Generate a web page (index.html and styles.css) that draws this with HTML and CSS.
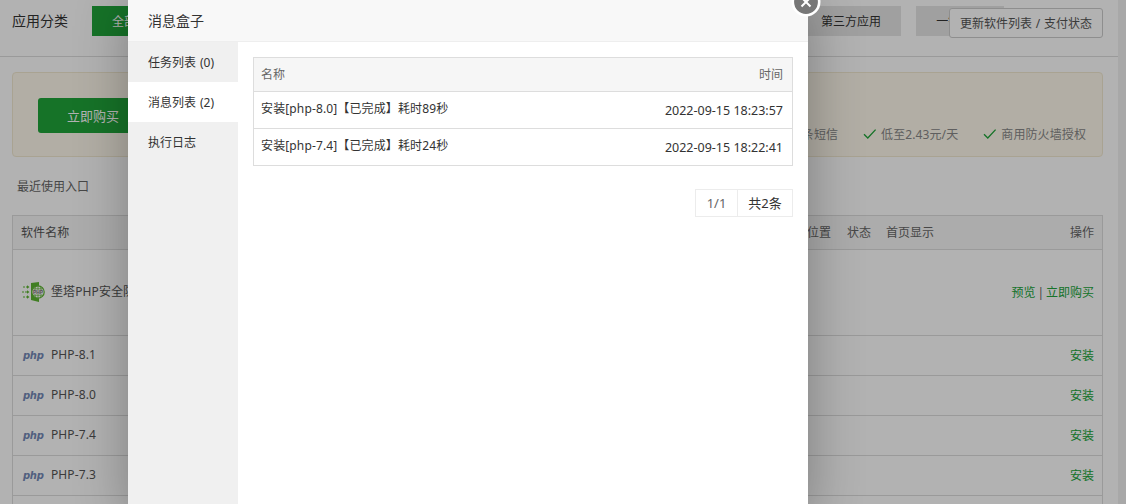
FILE: index.html
```html
<!DOCTYPE html>
<html lang="zh-CN">
<head>
    <meta charset="UTF-8">
    <meta name="viewport" content="width=device-width, initial-scale=1.0">
    <title>软件商店</title>
    <link rel="stylesheet" href="styles.css">
</head>
<body>
    <svg class="defs" width="0" height="0">
        <symbol id="check" viewBox="0 0 14 12">
            <path d="M1 6.2L4.8 10L12.6 1.6" fill="none" stroke="#20a53a" stroke-width="1.3"/>
        </symbol>
    </svg>
    <div class="page">
        <div class="category">
            <span class="category-title">应用分类</span>
            <div class="category-list">
                <button class="active">全部</button>
                <button>已安装</button>
                <button>运行环境</button>
                <button>系统工具</button>
                <button>宝塔插件</button>
                <button>专业版插件</button>
                <button>企业版插件</button>
                <button>第三方应用</button>
                <button>一键部署</button>
            </div>
            <button class="update">更新软件列表 / 支付状态</button>
        </div>

        <div class="banner">
            <button class="buy">立即购买</button>
            <ul class="features">
                <li><svg class="check"><use href="#check"/></svg>每月赠送条短信</li>
                <li><svg class="check"><use href="#check"/></svg>低至2.43元/天</li>
                <li><svg class="check"><use href="#check"/></svg>商用防火墙授权</li>
            </ul>
        </div>

        <div class="recent">最近使用入口</div>

        <div class="soft">
            <div class="soft-row soft-head">
                <span class="name">软件名称</span>
                <span class="place">位置</span>
                <span class="state">状态</span>
                <span class="show">首页显示</span>
                <span class="action">操作</span>
            </div>
            <div class="soft-row soft-tall">
                <span class="name">
                    <svg class="guard" viewBox="0 0 24 22">
                        <path d="M10 2L18 1V21L10 19Z" fill="#5cb531"/>
                        <circle cx="17" cy="11" r="6.2" fill="#fff" stroke="#5cb531" stroke-width="1.2"/>
                        <path d="M12 7.8H22M12 14.2H22M17 5V17M14.5 5.5Q12.5 11 14.5 16.5M19.5 5.5Q21.5 11 19.5 16.5" fill="none" stroke="#5cb531" stroke-width=".7"/>
                        <rect x="12" y="9" width="10" height="4.2" fill="#eee"/>
                        <text x="12" y="12.8" class="guard-text">PHP</text>
                        <path d="M2 6H7M1 11H7M2 16H7" stroke="#5cb531" stroke-dasharray="2 1"/>
                        <path d="M6 4.3L8.5 6L6 7.7ZM6 9.3L8.5 11L6 12.7ZM6 14.3L8.5 16L6 17.7Z" fill="#5cb531"/>
                    </svg>
                    堡塔PHP安全防护
                </span>
                <span class="action links"><a>预览</a> | <a>立即购买</a></span>
            </div>
            <div class="soft-row">
                <span class="name"><i class="php">php</i>PHP-8.1</span>
                <span class="action"><a>安装</a></span>
            </div>
            <div class="soft-row">
                <span class="name"><i class="php">php</i>PHP-8.0</span>
                <span class="action"><a>安装</a></span>
            </div>
            <div class="soft-row">
                <span class="name"><i class="php">php</i>PHP-7.4</span>
                <span class="action"><a>安装</a></span>
            </div>
            <div class="soft-row">
                <span class="name"><i class="php">php</i>PHP-7.3</span>
                <span class="action"><a>安装</a></span>
            </div>
            <div class="soft-row"></div>
        </div>
    </div>

    <div class="shade"></div>

    <div class="layer">
        <div class="layer-title">消息盒子</div>
        <div class="layer-body">
            <div class="menu">
                <p>任务列表 (0)</p>
                <p class="on">消息列表 (2)</p>
                <p>执行日志</p>
            </div>
            <div class="content">
                <table>
                    <thead>
                        <tr><th>名称</th><th class="time">时间</th></tr>
                    </thead>
                    <tbody>
                        <tr><td><span>安装[php-8.0]【已完成】耗时89秒</span></td><td class="time">2022-09-15 18:23:57</td></tr>
                        <tr><td><span>安装[php-7.4]【已完成】耗时24秒</span></td><td class="time">2022-09-15 18:22:41</td></tr>
                    </tbody>
                </table>
                <div class="pager">
                    <span class="pages">1/1</span>
                    <span class="count">共2条</span>
                </div>
            </div>
        </div>
        <svg class="close" viewBox="0 0 30 30">
            <circle cx="15" cy="15" r="13.2" fill="#777" stroke="#fff" stroke-width="2.6"/>
            <path d="M10.5 10.5L19.5 19.5M19.5 10.5L10.5 19.5" stroke="#fff" stroke-width="2"/>
        </svg>
    </div>
</body>
</html>
```
FILE: styles.css
```css
* {
    box-sizing: border-box;
}
body {
    margin: 0;
    height: 504px;
    overflow: hidden;
    position: relative;
    background: #f1f1f1;
    color: #666;
    font: 12px/18px "Noto Sans", "Noto Sans CJK SC", sans-serif;
}
button {
    font: inherit;
    border: 0;
    padding: 0;
    white-space: nowrap;
}
.defs {
    position: absolute;
}
.page {
    width: 1118px;
    height: 504px;
    overflow: hidden;
    background: #fff;
}
.category {
    position: relative;
    display: flex;
    height: 57px;
    padding: 6px 0 0 12px;
    border-bottom: 1px solid #ddd;
}
.category-title {
    width: 80px;
    font-size: 14px;
    line-height: 30px;
    color: #333;
}
.category-list {
    display: flex;
    gap: 15px;
}
.category-list button {
    height: 30px;
    padding: 2px 20px 0;
    background: #e6e6e6;
    color: #333;
}
.category-list .active {
    background: #20a53a;
    color: #fff;
}
.update {
    position: absolute;
    top: 8px;
    right: 15px;
    width: 154px;
    height: 30px;
    padding-top: 1px;
    border: 1px solid #ccc;
    border-radius: 3px;
    background: #fff;
    color: #555;
    word-spacing: 0.7px;
}
.banner {
    display: flex;
    justify-content: space-between;
    height: 85px;
    margin: 15px 15px 0 12px;
    padding: 25px 16px 0 25px;
    border: 1px solid #f3ead2;
    border-radius: 4px;
    background: #fffaec;
}
.buy {
    width: 110px;
    height: 35px;
    border-radius: 3px;
    background: #20a53a;
    color: #fff;
    font-size: 13px;
}
.features {
    display: flex;
    gap: 25px;
    margin: 28px 0 0;
    padding: 0;
    list-style: none;
    color: #888;
}
.features li {
    display: flex;
    letter-spacing: 0.1px;
}
.check {
    width: 14px;
    height: 12px;
    margin: 2px 4px 0 0;
}
.recent {
    padding: 21px 17px 0;
}
.soft {
    margin: 19px 15px 0 12px;
    border: 1px solid #ddd;
    border-bottom: 0;
}
.soft-row {
    display: grid;
    grid-template-columns: 786px 40px 39px 100px 1fr;
    align-items: center;
    height: 40px;
    padding: 0 8px;
    border-bottom: 1px solid #ddd;
}
.soft-head {
    height: 34px;
    background: #f6f6f6;
}
.soft-tall {
    height: 86px;
}
.name {
    display: flex;
    align-items: center;
    padding-bottom: 2px;
    color: #555;
    letter-spacing: 0.1px;
}
.soft-head .name {
    padding-bottom: 0;
}
.action {
    grid-column: 5;
    padding-top: 1px;
    text-align: right;
}
.links {
    word-spacing: -1.2px;
}
.action a {
    color: #20a53a;
}
.guard {
    width: 24px;
    height: 22px;
    margin-right: 6px;
}
.guard-text {
    font: bold 4.8px "Liberation Sans", sans-serif;
    fill: #777;
}
.php {
    width: 28px;
    padding: 2px 0 0 2px;
    margin-right: 2px;
    font: italic bold 10px/18px "DejaVu Sans", sans-serif;
    letter-spacing: -0.3px;
    color: #7388b6;
}
.shade {
    position: absolute;
    inset: 0;
    background: rgba(0, 0, 0, 0.3);
}
.layer {
    position: absolute;
    top: 0;
    left: 128px;
    display: flex;
    flex-direction: column;
    width: 680px;
    height: 520px;
    background: #fff;
    box-shadow: 1px 1px 50px rgba(0, 0, 0, 0.3);
    color: #333;
}
.layer-title {
    height: 42px;
    padding-left: 20px;
    border-bottom: 1px solid #eee;
    background: #f8f8f8;
    font-size: 14px;
    line-height: 41px;
}
.layer-body {
    display: flex;
    flex: 1;
}
.menu {
    width: 110px;
    background: #f0f0f0;
}
.menu p {
    height: 40px;
    margin: 0;
    padding-left: 20px;
    line-height: 41px;
    word-spacing: 0.8px;
}
.menu .on {
    background: #fff;
}
.content {
    flex: 1;
    padding: 15px;
}
table {
    width: 100%;
    border-collapse: collapse;
    border: 1px solid #ddd;
}
th, td {
    padding: 0 9px 0 7px;
    border-bottom: 1px solid #ddd;
    text-align: left;
}
th {
    height: 34px;
    background: #f6f6f6;
    color: #666;
    font-weight: normal;
}
td {
    height: 37px;
}
td span {
    display: block;
    padding-bottom: 2px;
    letter-spacing: 0.13px;
}
.time {
    text-align: right;
}
td.time {
    padding-top: 2px;
    font-size: 12.5px;
}
.pager {
    display: flex;
    width: 98px;
    height: 28px;
    margin: 23px 0 0 auto;
    border: 1px solid #ececec;
    font-size: 13px;
    line-height: 27px;
    text-align: center;
}
.pages {
    width: 42px;
    border-right: 1px solid #ececec;
    color: #666;
}
.count {
    flex: 1;
}
.close {
    position: absolute;
    top: -13px;
    right: -13px;
    width: 30px;
    height: 30px;
}
```
